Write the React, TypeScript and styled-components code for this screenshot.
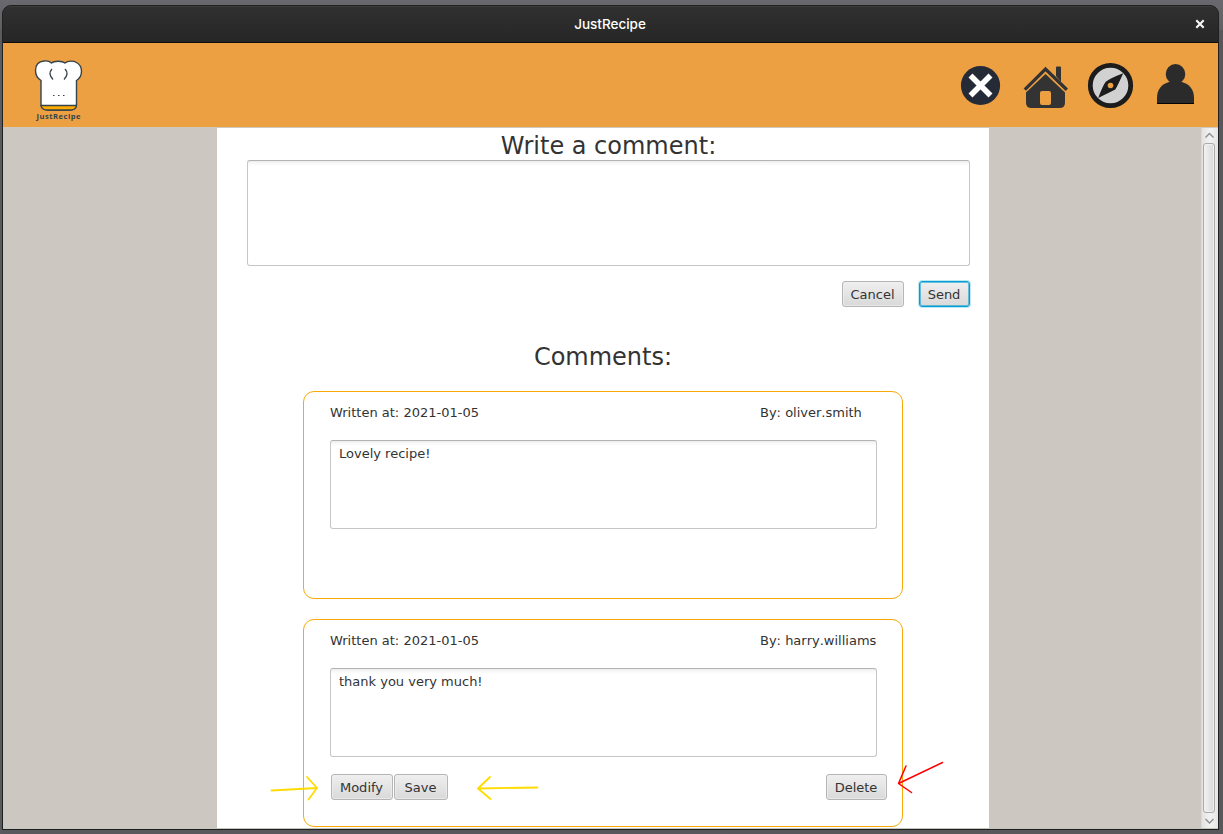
import React from "react";
import styled, { createGlobalStyle, css } from "styled-components";

const GlobalStyle = createGlobalStyle`
  * { box-sizing: border-box; }
  body { margin: 0; overflow: hidden; }
`;

const Desktop = styled.div`
  position: relative;
  width: 1223px;
  height: 834px;
  padding: 5px 4px 4px 2px;
  background: linear-gradient(90deg, #5c5b60 0, #59585c 3px, #58585b 1218px, #57565a 100%);
  font-family: "DejaVu Sans", sans-serif;
  color: #333;

  &::before {
    content: "";
    position: absolute;
    inset: 0 0 auto 0;
    height: 30px;
    background: linear-gradient(#69686e, #606064);
  }
`;

const Window = styled.div`
  position: relative;
  display: flex;
  flex-direction: column;
  width: 1217px;
  height: 825px;
  border: 1px solid #202020;
  border-radius: 9px 9px 0 0;
  overflow: hidden;
  background: #222;
`;

const TitleBar = styled.header`
  flex: 0 0 37px;
  display: grid;
  grid-template-columns: 1fr auto 1fr;
  align-items: center;
  padding: 0 13px 2px 0;
  background: linear-gradient(#303030, #262626);
  border-top: 1px solid #3b3b3b;
  border-bottom: 1px solid #0c0c0c;
`;

const WindowTitle = styled.h1`
  grid-column: 2;
  margin: 0 0 0 12px;
  font: 500 13.5px/18px Inter, sans-serif;
  color: #fff;
`;

const CloseIcon = styled.svg`
  grid-column: 3;
  justify-self: end;
  width: 10px;
  height: 10px;
`;

const NavBar = styled.nav`
  flex: 0 0 84px;
  display: flex;
  align-items: flex-start;
  justify-content: space-between;
  padding: 15px 20px 0 27px;
  background: #eda042;
`;

const NavIcons = styled.div`
  display: flex;
`;

const Content = styled.main`
  flex: 1;
  display: flex;
  min-height: 0;
  background: #cdc7c2;
  border-top: 1px solid #d0c9bf;
  border-bottom: 1px solid #c4c6c0;
`;

const Viewport = styled.div`
  flex: 1;
  padding-left: 214px;
  overflow: hidden;
`;

const Page = styled.div`
  width: 772px;
  height: 700px;
  background: #fff;
  padding: 0 19px 0 30px;
`;

const Heading = styled.h2<{ $height: number }>`
  height: ${(p) => p.$height}px;
  margin: 0;
  font-size: 24px;
  font-weight: 400;
  line-height: 36px;
  text-align: center;
  white-space: nowrap;
`;

const CommentsHeading = styled(Heading)`
  margin: 32px 11px 0 0;
`;

const TextBox = styled.div<{ $height: number }>`
  height: ${(p) => p.$height}px;
  padding: 5px 8px;
  border: 1px solid #c6c6c6;
  border-top-color: #b3b3b3;
  border-radius: 3px;
  background: linear-gradient(#ececec 0, #f7f7f7 2px, #fff 5px);
  font-size: 13px;
  line-height: 16px;
`;

const FormActions = styled.div`
  display: flex;
  justify-content: flex-end;
  gap: 15px;
  margin-top: 15px;
`;

const Button = styled.button<{ $width: number; $focused?: boolean }>`
  width: ${(p) => p.$width}px;
  height: 26px;
  padding: 2px 1px 0 0;
  border: 1px solid #b5b5b5;
  border-radius: 3px;
  background: linear-gradient(#efefef, #d9d9d9);
  box-shadow: inset 0 0 0 1px #f0f0f0aa;
  font: 13px/20px "DejaVu Sans", sans-serif;
  color: #333;
  ${(p) =>
    p.$focused &&
    css`
      border-color: #039ed3;
      box-shadow: 0 0 0 1px #039ed340, inset 0 0 0 1px #039ed390;
    `}
`;

const CommentList = styled.div`
  display: flex;
  flex-direction: column;
  gap: 20px;
  width: 600px;
  margin: 17px 0 0 56px;
`;

const Card = styled.article`
  height: 208px;
  padding: 12px 25px 0 26px;
  border: 1px solid #f9a908;
  border-radius: 11px;
  background: #fff;
`;

const CardHeader = styled.div`
  display: grid;
  grid-template-columns: 430px 1fr;
  height: 36px;
  font-size: 13px;
  line-height: 17px;
  white-space: nowrap;
`;

const Author = styled.span`
  font-kerning: none;
`;

const CardActions = styled.div`
  display: flex;
  gap: 1px;
  margin: 17px -10px 0 1px;

  > :last-child {
    margin-left: auto;
  }
`;

const ScrollBar = styled.div`
  flex: 0 0 17px;
  display: flex;
  flex-direction: column;
  align-items: center;
  border-left: 1px solid #d9d9d9;
  background: linear-gradient(90deg, #e3e3e3, #f2f2f2 50%, #e6e6e6);
`;

const ScrollArrow = styled.svg`
  width: 16px;
  height: 15px;
`;

const Thumb = styled.div`
  width: 12px;
  height: 670px;
  margin-right: 2px;
  border: 1px solid #aaa;
  border-radius: 3px;
  background: linear-gradient(90deg, #f2f2f2, #d9d9d9);
  box-shadow: inset 0 0 0 1px #f0f0f0;
`;

const Annotations = styled.svg`
  position: absolute;
  left: 265px;
  top: 755px;
  width: 685px;
  height: 50px;
  fill: none;
  stroke-linecap: round;
  stroke-linejoin: round;
`;

const Logo = () => (
  <svg width="58" height="65" viewBox="30 58 58 65">
    <path
      d="M41 80.5C37 78 35.500 75 35.500 70.500C35.500 65 38.500 61.500 44 61C47 60.600 50 61.600 51.500 63C54 60.700 62 60.500 65 63C68 60.700 73 60.500 76.500 62.500C80 64.500 81.500 67 81.500 71C81.500 75.500 80 78.500 76.500 80.500V104C76.500 108 74 110 70 110H48C43.500 110 41 108 41 104Z"
      fill="#fff" stroke="#35434d" strokeWidth="1.4"
    />
    <path d="M41 105.500H76.500C76 108.500 74 110 70 110H48C44 110 41.500 108.500 41 105.500Z" fill="#ffab00" stroke="#35434d" strokeWidth="1.3" />
    <path d="M52 69Q47.500 73.500 53 79.500M65 69Q69.500 73.500 64 79.500" fill="none" stroke="#35434d" strokeWidth="1.3" />
    <path d="M53 95.500h1.500M58 95.500h1.500M63 95.500h1.500" stroke="#35434d" strokeWidth="1.2" />
    <text x="36.500" y="119" textLength="44" fontFamily="Open Sans, sans-serif" fontSize="7.600" fontWeight="700" fill="#35434d">JustRecipe</text>
  </svg>
);

const CancelIcon = () => (
  <svg width="63" height="56" viewBox="957 58 63 56">
    <circle cx="980.500" cy="85.500" r="19.600" fill="#252a37" />
    <path d="M970.500 75.500L990.500 95.500M990.500 75.500L970.500 95.500" stroke="#fff" strokeWidth="5.600" />
  </svg>
);

const HomeIcon = () => (
  <svg width="65" height="56" viewBox="1020 58 65 56">
    <path d="M1056 76V67.500Q1056 66.500 1057 66.500H1060Q1061 66.500 1061 67.500V82Z" fill="#333" />
    <path d="M1024.800 89.700L1045.500 69L1066.800 89.700" fill="none" stroke="#333" strokeWidth="3.300" />
    <path d="M1045.500 74L1065 92.500V102.500Q1065 108 1059.500 108H1031.500Q1026 108 1026 102.500V92.500Z" fill="#333" />
    <rect x="1040" y="91" width="11" height="14" rx="2" fill="#eda042" />
  </svg>
);

const ExploreIcon = () => (
  <svg width="68" height="56" viewBox="1085 58 68 56">
    <circle cx="1110.500" cy="85.500" r="20.200" fill="#d1d1d1" stroke="#1c1c1c" strokeWidth="4.800" />
    <path d="M1123.200 73.200Q1118 85 1115.300 89.500Q1110 92 1098.200 98Q1103 85 1105.800 81.700Q1110.500 78 1123.200 73.200Z" fill="#1c1c1c" />
    <circle cx="1110.500" cy="85.500" r="2.800" fill="#eda042" />
  </svg>
);

const UserIcon = () => (
  <svg width="45" height="56" viewBox="1153 58 45 56">
    <ellipse cx="1175.500" cy="74" rx="9.800" ry="10" fill="#2b2b2b" />
    <path d="M1157 103.500V98C1157 89 1162 84 1169 82H1182C1189 84 1194 89 1194 98V103.500Z" fill="#2b2b2b" />
    <path d="M1157 103.500H1194" stroke="#050505" />
  </svg>
);

interface Comment {
  date: string;
  author: string;
  text: string;
  own?: boolean;
}

const comments: Comment[] = [
  { date: "2021-01-05", author: "oliver.smith", text: "Lovely recipe!" },
  { date: "2021-01-05", author: "harry.williams", text: "thank you very much!", own: true },
];

export default function App() {
  return (
    <Desktop>
      <GlobalStyle />
      <Window>
        <TitleBar>
          <WindowTitle>JustRecipe</WindowTitle>
          <CloseIcon viewBox="0 0 10 10">
            <path d="M1.300 1.300L8.700 8.700M8.700 1.300L1.300 8.700" stroke="#f4f4f4" strokeWidth="2.200" />
          </CloseIcon>
        </TitleBar>
        <NavBar>
          <Logo />
          <NavIcons>
            <CancelIcon />
            <HomeIcon />
            <ExploreIcon />
            <UserIcon />
          </NavIcons>
        </NavBar>
        <Content>
          <Viewport>
            <Page>
              <Heading $height={32}>Write a comment:</Heading>
              <TextBox $height={106} />
              <FormActions>
                <Button $width={62}>Cancel</Button>
                <Button $width={51} $focused>Send</Button>
              </FormActions>
              <CommentsHeading $height={35}>Comments:</CommentsHeading>
              <CommentList>
                {comments.map((c) => (
                  <Card key={c.author}>
                    <CardHeader>
                      <span>Written at: {c.date}</span>
                      <Author>By: {c.author}</Author>
                    </CardHeader>
                    <TextBox $height={89}>{c.text}</TextBox>
                    {c.own && (
                      <CardActions>
                        <Button $width={62}>Modify</Button>
                        <Button $width={54}>Save</Button>
                        <Button $width={61}>Delete</Button>
                      </CardActions>
                    )}
                  </Card>
                ))}
              </CommentList>
            </Page>
          </Viewport>
          <ScrollBar>
            <ScrollArrow viewBox="0 0 16 15">
              <path d="M3.500 9.500L7.500 5.500L11.500 9.500" fill="none" stroke="#8c8c8c" strokeWidth="1.300" />
            </ScrollArrow>
            <Thumb />
            <ScrollArrow viewBox="0 0 16 15">
              <path d="M3.500 6L7.500 10L11.500 6" fill="none" stroke="#8c8c8c" strokeWidth="1.300" />
            </ScrollArrow>
          </ScrollBar>
        </Content>
      </Window>
      <Annotations viewBox="265 755 685 50">
        <g stroke="#ffdc00" strokeWidth="1.800">
          <path d="M271.500 790.500L317 788M307 777L317 788L308.500 799.500" />
          <path d="M537.500 787.500L478 788.500M490 777L478 788.500L490.500 799" />
        </g>
        <path d="M942.500 762.500L898.500 783.500M906 766L898.500 783.500L911.500 792.500" stroke="#f00" strokeWidth="1.500" />
      </Annotations>
    </Desktop>
  );
}
